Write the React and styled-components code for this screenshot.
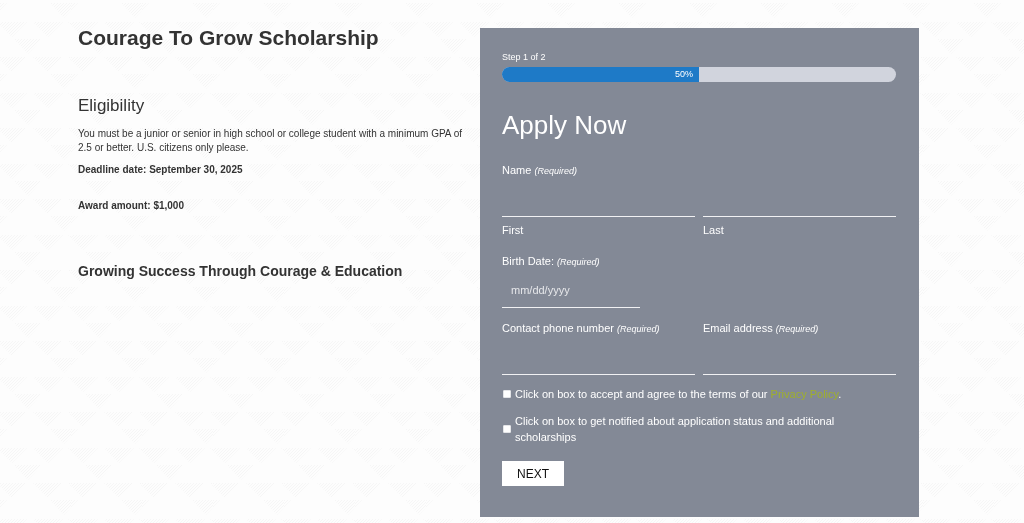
import React from 'react';
import styled, { createGlobalStyle } from 'styled-components';

const GlobalStyle = createGlobalStyle`
  * {
    box-sizing: border-box;
  }

  body {
    margin: 0;
    background: #fdfdfd;
    color: #333;
    font-family: "Liberation Sans", Arial, sans-serif;
    font-size: 10px;
    line-height: 14px;
  }
`;

const Backdrop = styled.svg`
  position: fixed;
  inset: 0;
  width: 100%;
  height: 100%;
  z-index: -1;
`;

const Page = styled.main`
  display: grid;
  grid-template-columns: 402fr 439fr;
  align-items: start;
  padding: 28px 105px 6px 78px;
`;

const Intro = styled.section`
  padding-right: 16px;

  p {
    margin: 8px 0 0;
  }
`;

const Title = styled.h1`
  margin: 0;
  font-size: 21px;
  line-height: 20px;
`;

const Subtitle = styled.h2`
  margin: 48px 0 11px;
  font-size: 17px;
  font-weight: 400;
  line-height: 20px;
`;

const Tagline = styled.h3`
  margin: 48px 0 0;
  font-size: 14px;
  line-height: 20px;
`;

const Award = styled.div`
  margin-top: 22px;
  font-weight: 700;
`;

const Panel = styled.form`
  padding: 22px 23px 31px 22px;
  background: #838996;
  color: #fff;
  font-size: 11px;
  line-height: 16px;
`;

const Step = styled.div`
  margin-bottom: 3px;
  font-size: 9px;
  line-height: 14px;
`;

const Progress = styled.div`
  height: 15px;
  overflow: hidden;
  border-radius: 8px;
  background: #d1d4dd;
`;

const ProgressFill = styled.div`
  height: 100%;
  padding-right: 6px;
  background: #1e7ac7;
  font-size: 9px;
  line-height: 14px;
  text-align: right;
`;

const FormTitle = styled.h2`
  margin: 28px 0 22px;
  font-size: 26px;
  font-weight: 400;
  line-height: 30px;
`;

const Group = styled.fieldset`
  margin: 0;
  padding: 0;
  border: 0;

  legend {
    padding: 0;
  }
`;

const Columns = styled.div`
  display: grid;
  grid-template-columns: 1fr 1fr;
  gap: 8px;
`;

const Field = styled.div`
  margin-top: ${props => props.$top || 0}px;

  label {
    display: block;
  }
`;

const Input = styled.input`
  display: block;
  width: ${props => props.$width || '100%'};
  height: 35px;
  margin: 4px 0 ${props => (props.$captioned ? '5px' : '0')};
  padding: 0 9px;
  border: 0;
  border-bottom: 1px solid #f1f1f3;
  border-radius: 0;
  outline: 0;
  background: transparent;
  color: #fff;
  font: inherit;

  &::placeholder {
    color: #e6e7ea;
    opacity: 1;
  }
`;

const RequiredText = styled.span`
  font-size: 9px;
  font-style: italic;
  line-height: 1;
`;

const CheckRow = styled.div`
  display: flex;
  align-items: center;
  gap: 4px;
  margin-top: 11px;
  padding: 0 40px 0 1px;

  input {
    appearance: none;
    flex: none;
    width: 8px;
    height: 8px;
    margin: 0;
    border: 1px solid #e4e5e8;
    border-radius: 1px;
    background: #fff;
  }

  input:checked {
    background: #1e7ac7;
  }

  a {
    color: #9fb02c;
    text-decoration: none;
  }
`;

const NextButton = styled.button`
  display: block;
  height: 25px;
  margin-top: 16px;
  padding: 0 15px;
  border: 0;
  background: #fff;
  color: #111;
  font-family: inherit;
  font-size: 12px;
  cursor: pointer;
`;

const Required = () => <RequiredText>(Required)</RequiredText>;

const Triangles = () => (
  <Backdrop aria-hidden="true">
    <defs>
      <pattern id="grain" width="3" height="3" patternUnits="userSpaceOnUse">
        <path d="M0 0h1v1h-1zM2 1h1v1h-1zM1 2h1v1h-1z" fill="#f6f6f6" />
      </pattern>
      <pattern id="triangles" y="3" width="71" height="71" patternUnits="userSpaceOnUse">
        <g fill="url(#grain)">
          <path d="M50 0h28l-14 15zM-21 0h28l-14 15z" />
          <path d="M14 36h28l-14 15z" />
          <path d="M-3 19h30l-15 15zM33 19h30l-15 15zM68 19h30l-15 15z" />
          <path d="M-3 54h30l-15 15zM33 54h30l-15 15zM68 54h30l-15 15z" />
        </g>
      </pattern>
    </defs>
    <rect width="100%" height="100%" fill="url(#triangles)" />
  </Backdrop>
);

const App = () => {
  const progress = 50;

  return <>
    <GlobalStyle />
    <Triangles />

    <Page>
      <Intro>
        <Title>Courage To Grow Scholarship</Title>
        <Subtitle>Eligibility</Subtitle>
        <p>
          You must be a junior or senior in high school or college student with a minimum GPA of
          2.5 or better. U.S. citizens only please.
        </p>
        <p><strong>Deadline date: September 30, 2025</strong></p>
        <Award>Award amount: $1,000</Award>
        <Tagline>Growing Success Through Courage &amp; Education</Tagline>
      </Intro>

      <Panel onSubmit={e => e.preventDefault()}>
        <Step>Step 1 of 2</Step>
        <Progress>
          <ProgressFill style={{ width: `${progress}%` }}>{progress}%</ProgressFill>
        </Progress>

        <FormTitle>Apply Now</FormTitle>

        <Group>
          <legend>Name <Required /></legend>
          <Columns>
            <Field>
              <Input id="first" type="text" $captioned />
              <label htmlFor="first">First</label>
            </Field>
            <Field>
              <Input id="last" type="text" $captioned />
              <label htmlFor="last">Last</label>
            </Field>
          </Columns>
        </Group>

        <Field $top={15}>
          <label htmlFor="birth">Birth Date: <Required /></label>
          <Input id="birth" type="text" placeholder="mm/dd/yyyy" $width="35%" />
        </Field>

        <Columns>
          <Field $top={12}>
            <label htmlFor="phone">Contact phone number <Required /></label>
            <Input id="phone" type="tel" />
          </Field>
          <Field $top={12}>
            <label htmlFor="email">Email address <Required /></label>
            <Input id="email" type="email" />
          </Field>
        </Columns>

        <CheckRow>
          <input id="terms" type="checkbox" />
          <label htmlFor="terms">
            Click on box to accept and agree to the terms of our <a href="#privacy">Privacy Policy</a>.
          </label>
        </CheckRow>
        <CheckRow>
          <input id="notify" type="checkbox" />
          <label htmlFor="notify">
            Click on box to get notified about application status and additional scholarships
          </label>
        </CheckRow>

        <NextButton type="submit">NEXT</NextButton>
      </Panel>
    </Page>
  </>
}

export default App;
